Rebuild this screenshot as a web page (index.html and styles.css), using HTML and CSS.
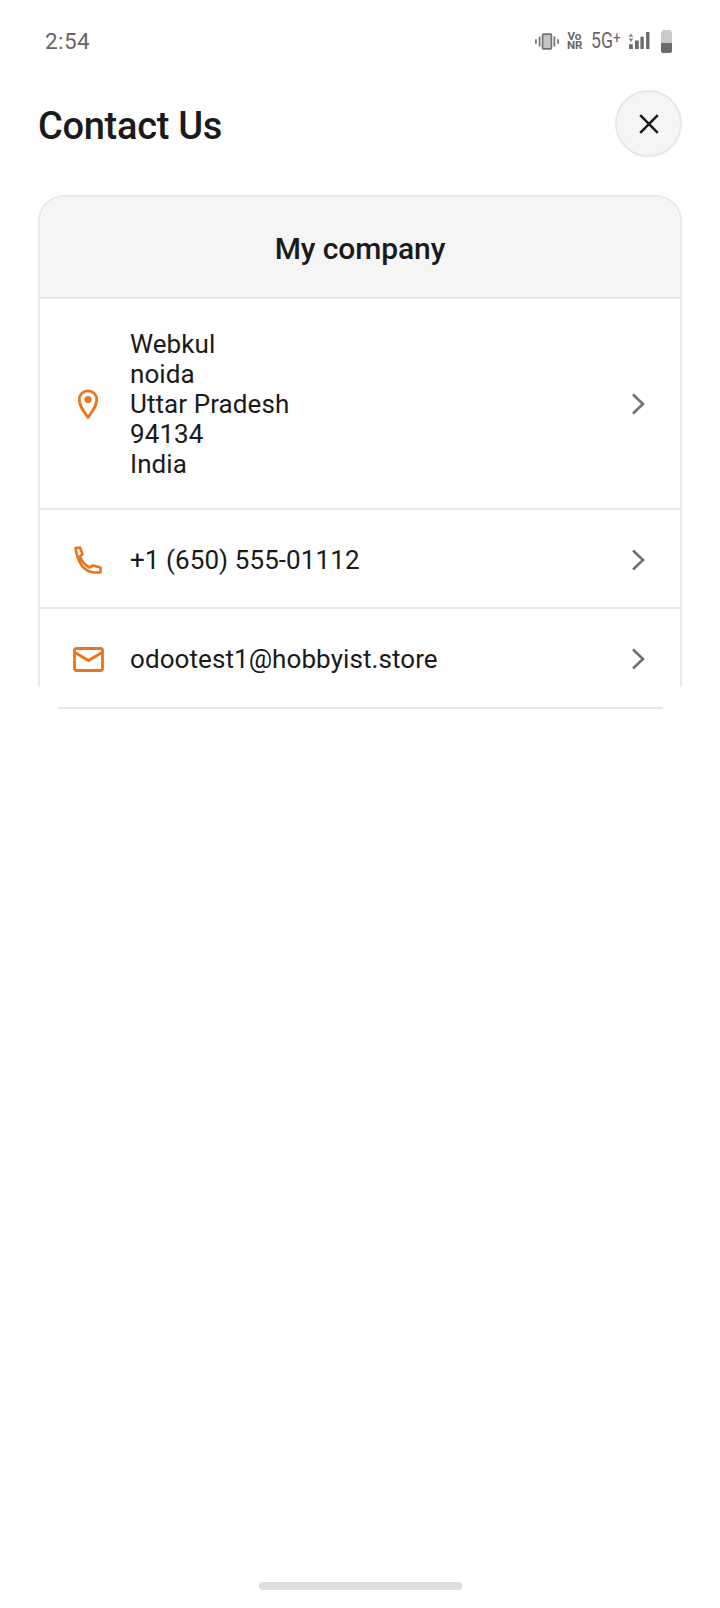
FILE: index.html
```html
<!DOCTYPE html>
<html lang="en">
<head>
<meta charset="utf-8">
<title>Contact Us</title>
<link rel="stylesheet" href="styles.css">
</head>
<body>
<div class="screen">
  <div class="status">
    <span class="time">2:54</span>
    <div class="status-icons">
      <svg class="i-vib" width="24" height="17" viewBox="0 0 26 18"><path d="M1 6.500v5M5 3.500v11M21 3.500v11M25 6.500v5" fill="none" stroke="#777" stroke-width="2"/><rect x="8.200" y="1" width="9.600" height="16" fill="#c4c4c4" stroke="#707070" stroke-width="1.800" rx="1"/></svg>
      <span class="vonr">Vo<br>NR</span>
      <span class="fiveg">5G<sup class="plus">+</sup></span>
      <svg class="i-sig" width="22" height="19" viewBox="0 0 23 20"><path d="M3 2.500 5.600 6H.4zM3 11.500.4 8h5.200z" fill="#8a8a8a"/><path d="M1 14h4v5H1zM7.300 10h4v9h-4zM13 6h3.500v13H13zM19 1h3.500v18H19z" fill="#6a6a6a"/></svg>
      <svg class="i-bat" width="11" height="23" viewBox="0 0 11 23"><path d="M0 13V4Q0 0 3.500 0h4Q11 0 11 4v9z" fill="#c9c9c9"/><path d="M0 13h11v8q0 2-2 2H2q-2 0-2-2z" fill="#6b6b6b"/></svg>
    </div>
  </div>
  <header class="topbar">
    <h1 class="title">Contact Us</h1>
    <button class="close" aria-label="Close">
      <svg width="20" height="20" viewBox="0 0 20 20"><path d="M1.200 1.200 18.800 18.800M18.800 1.200 1.200 18.800" stroke="#1a1a1a" stroke-width="2.500" fill="none"/></svg>
    </button>
  </header>
  <section class="card">
    <div class="card-head">My company</div>
    <div class="row row-address">
      <span class="icon">
        <svg width="24" height="32" viewBox="0 0 24 32"><path d="M12 29.500C7.500 23 3.300 18.300 3.300 11.500A8.700 8.700 0 0 1 20.700 11.500C20.700 18.300 16.500 23 12 29.500Z" fill="none" stroke="#e8761e" stroke-width="2.800" stroke-linejoin="round"/><circle cx="12" cy="11.500" r="3.600" fill="#e8761e"/></svg>
      </span>
      <div class="text">Webkul<br>noida<br>Uttar Pradesh<br>94134<br>India</div>
      <svg class="chev" width="14" height="22" viewBox="0 0 14 22"><path d="M2 1.500 12 11 2 20.500" fill="none" stroke="#717171" stroke-width="2.600"/></svg>
    </div>
    <div class="row row-single">
      <span class="icon">
        <svg width="28" height="28" viewBox="0 0 28 28"><path d="M1.500 2 6 1.500 8.500 8 5.800 10.500Q9 18 15.500 21.500L19 19.500 26.500 21.500V26.500H20Q5 25 1.500 2Z" fill="none" stroke="#e8761e" stroke-width="2.600" stroke-linejoin="round"/></svg>
      </span>
      <div class="text">+1 (650) 555-01112</div>
      <svg class="chev" width="14" height="22" viewBox="0 0 14 22"><path d="M2 1.500 12 11 2 20.500" fill="none" stroke="#717171" stroke-width="2.600"/></svg>
    </div>
    <div class="row row-single">
      <span class="icon">
        <svg width="31" height="25" viewBox="0 0 31 25"><rect x="1.500" y="1.500" width="28" height="22" rx="2" fill="none" stroke="#e8761e" stroke-width="2.800"/><path d="M2 5.500 15.500 13.500 29 5.500" fill="none" stroke="#e8761e" stroke-width="2.800"/></svg>
      </span>
      <div class="text">odootest1@hobbyist.store</div>
      <svg class="chev" width="14" height="22" viewBox="0 0 14 22"><path d="M2 1.500 12 11 2 20.500" fill="none" stroke="#717171" stroke-width="2.600"/></svg>
    </div>
  </section>
  <div class="spacer"></div>
  <div class="home-bar"></div>
</div>
</body>
</html>
```
FILE: styles.css
```css
* { box-sizing: border-box; }
html, body { margin: 0; padding: 0; background: #fff; }
body { font-family: Roboto, "Noto Sans", sans-serif; color: #1a1a1a; }
.screen { width: 720px; height: 1608px; display: flex; flex-direction: column; }

.status { height: 82px; padding: 27px 48px 0 45px; display: flex; justify-content: space-between; align-items: flex-start; color: #666; }
.time { font-size: 22.500px; line-height: 28px; letter-spacing: .4px; font-weight: 400; }
.status-icons { display: flex; align-items: center; height: 28px; }
.i-vib { margin-right: 8px; }
.vonr { display: block; text-align: center; font-size: 11.500px; line-height: 9.500px; font-weight: 700; margin-right: 9px; width: 15px; }
.fiveg { font-size: 22px; line-height: 24px; font-weight: 400; transform: scaleX(.8); transform-origin: left; margin-right: 0; white-space: nowrap; }
.plus { font-size: 17px; line-height: 0; vertical-align: 5px; }
.i-sig { margin-right: 11px; margin-top: -2px; }

.topbar { height: 113px; padding: 8px 38px 0 38px; display: flex; justify-content: space-between; align-items: flex-start; flex: none; }
.title { margin: 14px 0 0; font-size: 38px; line-height: 44px; font-weight: 500; letter-spacing: -.3px; }
.close { width: 67px; height: 67px; border-radius: 50%; background: #f5f5f5; border: 2px solid #e8e8e8; padding: 0; display: flex; align-items: center; justify-content: center; }

.card { position: relative; width: 644px; margin-left: 38px; border: 2px solid #e8e8e8; border-radius: 26px; flex: none; }
.card::after { content: ""; position: absolute; left: -2px; right: -2px; bottom: -2px; height: 22px; background: #fff linear-gradient(#e8e8e8, #e8e8e8) no-repeat center bottom / 605px 2px; }
.card-head { height: 102px; padding-top: 2px; background: #f5f5f5; border-radius: 24px 24px 0 0; border-bottom: 2px solid #e8e8e8; display: flex; align-items: center; justify-content: center; font-size: 30px; font-weight: 500; letter-spacing: -.1px; }
.row { display: flex; align-items: center; padding: 0 35px 0 31px; }
.row-address { height: 211px; border-bottom: 2px solid #e8e8e8; }
.row-single { height: 99px; padding-top: 2px; border-bottom: 2px solid #e8e8e8; }
.row-single:last-child { border-bottom: 0; height: 98px; padding-top: 2px; }
.icon { width: 34px; display: flex; justify-content: center; margin-right: 25px; flex: none; }
.text { flex: 1; font-size: 26px; line-height: 30px; letter-spacing: .08px; }
.chev { flex: none; }

.spacer { flex: 1; }
.home-bar { width: 203px; height: 8px; border-radius: 4px; background: #dedede; margin: 0 auto 18px; flex: none; }
```
